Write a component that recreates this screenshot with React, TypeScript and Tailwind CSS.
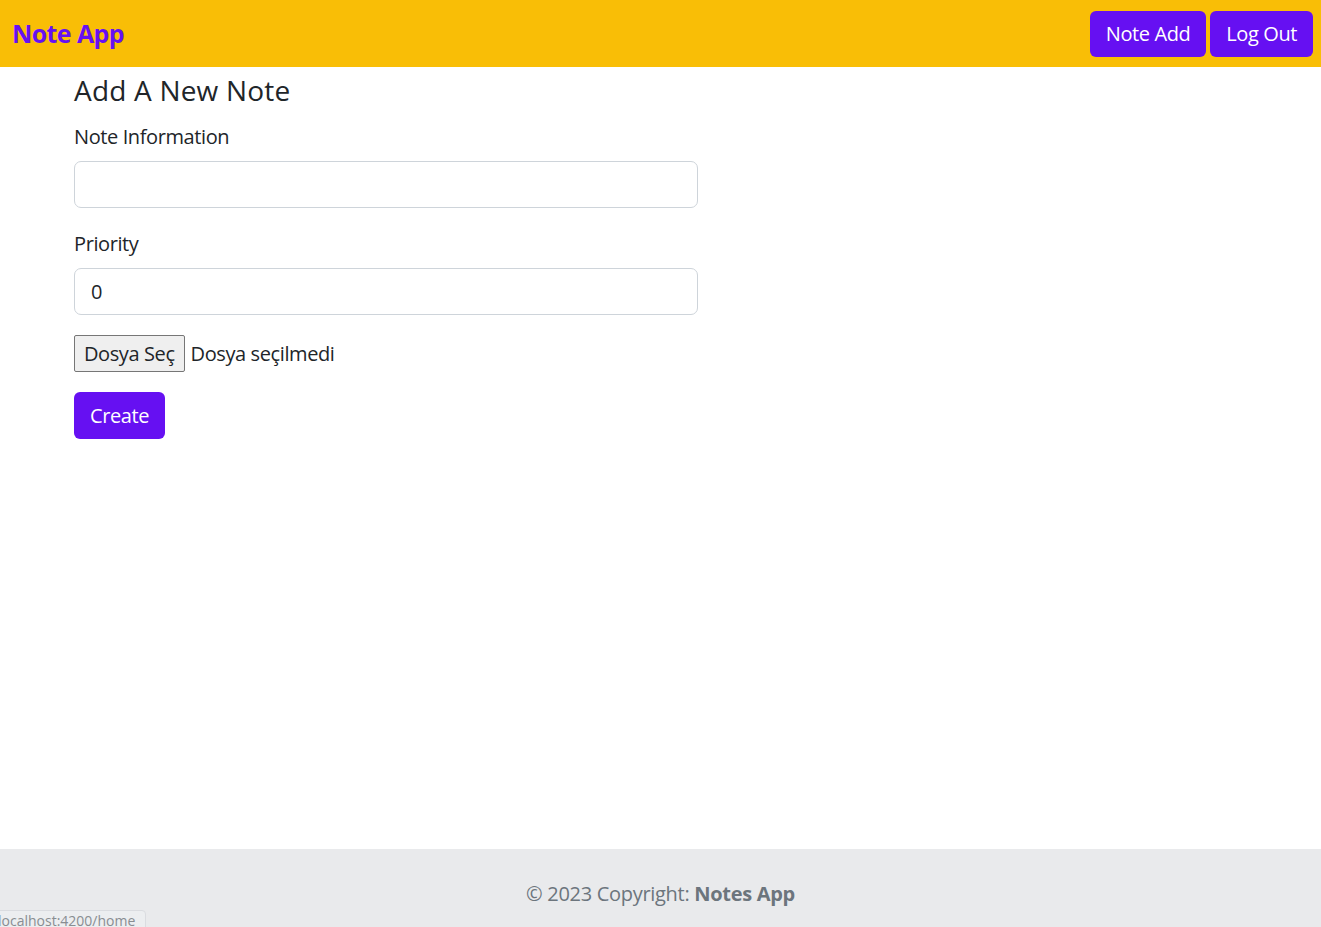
import React from "react";

const font = { fontFamily: '"Segoe UI", "Open Sans", "Noto Sans", sans-serif' };

const Navbar = () => (
  <nav className="h-[67px] bg-[#f9be06] flex items-center justify-between pl-3 pr-2">
    <a href="#" className="text-[25px] font-bold text-[#6610f2] tracking-[-0.6px]">
      Note App
    </a>
    <div className="flex gap-1">
      <button className="h-[46px] px-4 rounded-md bg-[#6610f2] text-white text-[20px] tracking-[-0.4px]">Note Add</button>
      <button className="h-[46px] px-4 rounded-md bg-[#6610f2] text-white text-[20px] tracking-[-0.4px]">Log Out</button>
    </div>
  </nav>
);

const NoteForm = () => (
  <div className="ml-[74px] pt-[3px] w-[624px] tracking-[-0.4px]">
    <h1 className="text-[28px] leading-[40px] text-[#212529] tracking-[0.2px]">Add A New Note</h1>
    <label className="block mt-[12px] text-[20px] leading-[30px] text-[#212529]">Note Information</label>
    <input
      type="text"
      className="mt-[9px] block w-full h-[47px] rounded-[7px] border border-[#ced4da] px-4 text-[20px]"
    />
    <label className="block mt-[21px] text-[20px] leading-[30px] text-[#212529]">Priority</label>
    <input
      type="text"
      defaultValue="0"
      className="mt-[9px] block w-full h-[47px] rounded-[7px] border border-[#ced4da] px-4 text-[20px] text-[#212529]"
    />
    <div className="mt-[20px] flex items-center gap-[6px] text-[20px] text-[#212529]">
      <span className="h-[37px] px-[9px] flex items-center border border-[#767676] bg-[#efefef] rounded-[2px]">
        Dosya Seç
      </span>
      <span>Dosya seçilmedi</span>
    </div>
    <button className="mt-[20px] h-[47px] px-4 rounded-md bg-[#6610f2] text-white text-[20px]">Create</button>
  </div>
);

const Footer = () => (
  <footer className="h-[78px] bg-[#e9eaec] flex justify-center pt-[30px] text-[20px] text-[#6c757d] tracking-[-0.3px] relative">
    <span>
      © 2023 Copyright: <b className="font-bold">Notes App</b>
    </span>
    <div className="absolute left-[-11px] bottom-[-6px] h-[23px] pl-2 pr-[10px] rounded-[4px] border border-[#dadce0] bg-[#eceef0] text-[14px] text-[#888d92] leading-[20px] tracking-normal whitespace-nowrap">
      localhost:4200/home
    </div>
  </footer>
);

export default function App() {
  return (
    <div className="h-[927px] flex flex-col bg-white overflow-hidden" style={font}>
      <Navbar />
      <main className="flex-1">
        <NoteForm />
      </main>
      <Footer />
    </div>
  );
}
